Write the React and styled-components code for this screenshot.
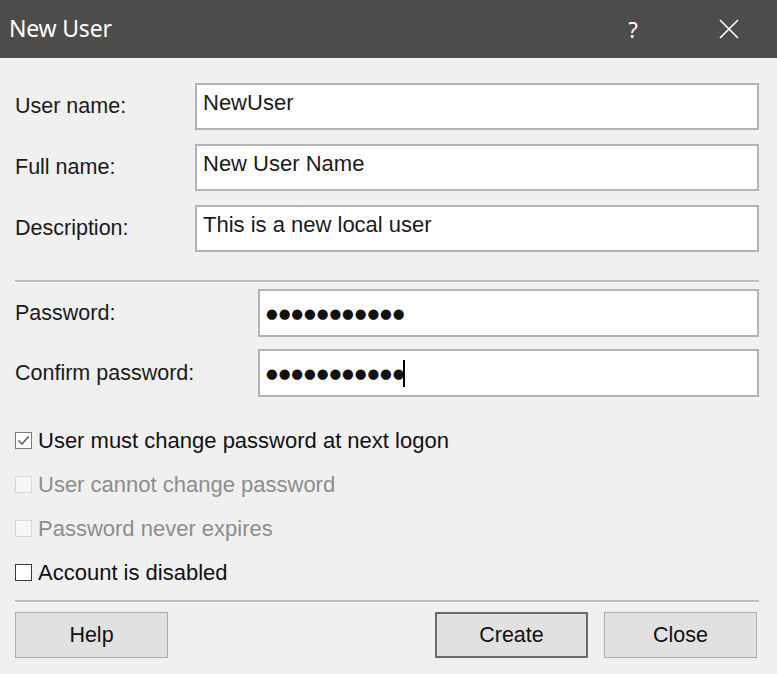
import React from "react";
import styled, { createGlobalStyle } from "styled-components";

const Global = createGlobalStyle`
  html, body { margin: 0; padding: 0; background: #f0f0f0; }
  body { font-family: "Liberation Sans", Arial, sans-serif; }
`;

const Dialog = styled.div`
  width: 777px;
  height: 674px;
  background: #f0f0f0;
  display: flex;
  flex-direction: column;
  overflow: hidden;
`;

const TitleBar = styled.div`
  height: 58px;
  background: #4d4c4a;
  color: #ffffff;
  display: flex;
  align-items: center;
  padding-left: 9px;
  font-family: "Noto Sans", sans-serif;
  font-size: 23px;
  flex-shrink: 0;
`;

const Title = styled.div`
  flex: 1;
  letter-spacing: -0.2px;
  margin-top: -2px;
`;

const TitleButton = styled.div`
  width: ${(p) => p.$w}px;
  height: 58px;
  display: flex;
  align-items: center;
  justify-content: center;
  font-size: 22px;
  margin-right: ${(p) => p.$mr || 0}px;
`;

const Content = styled.div`
  padding: 25px 18px 0 15px;
  display: flex;
  flex-direction: column;
`;

const FieldGrid = styled.div`
  display: grid;
  grid-template-columns: ${(p) => p.$label}px 1fr;
  row-gap: ${(p) => p.$gap}px;
  align-items: center;
`;

const Label = styled.div`
  font-size: 21.5px;
  color: #1a1a1a;
`;

const TextBox = styled.div`
  height: ${(p) => p.$h}px;
  box-sizing: border-box;
  background: #ffffff;
  border: 2px solid #b3b3b3;
  padding: 0 0 0 6px;
  display: flex;
  align-items: ${(p) => (p.$dots ? "center" : "flex-start")};
  padding-top: ${(p) => (p.$dots ? 0 : 5)}px;
  font-size: 22px;
  color: #1a1a1a;
`;

const Dots = styled.span`
  font-family: "DejaVu Sans", sans-serif;
  font-size: 13.5px;
  letter-spacing: 0.9px;
  margin-left: 0px;
  color: #111;
`;

const Caret = styled.span`
  display: inline-block;
  width: 2px;
  height: 27px;
  background: #000;
  margin-left: -2px;
`;

const Separator = styled.div`
  height: 2px;
  background: #bdbdbd;
  border-bottom: 1px solid #ffffff;
  margin: ${(p) => p.$m};
`;

const CheckList = styled.div`
  display: flex;
  flex-direction: column;
  gap: 21px;
  margin-top: 32px;
`;

const CheckRow = styled.div`
  display: flex;
  align-items: center;
  height: 23px;
  font-size: 22px;
  color: ${(p) => (p.$disabled ? "#8d8d8d" : "#111111")};
`;

const Box = styled.span`
  width: 17px;
  height: 17px;
  box-sizing: border-box;
  border: 1px solid ${(p) => (p.$disabled ? "#d9d9d9" : p.$checked ? "#7a7a7a" : "#3a3a3a")};
  background: ${(p) => (p.$disabled ? "#f7f7f7" : "#ffffff")};
  margin-right: 6px;
  display: flex;
  align-items: center;
  justify-content: center;
  flex-shrink: 0;
`;

const ButtonRow = styled.div`
  display: flex;
  align-items: center;
  padding-right: 2px;
`;

const Spacer = styled.div`
  flex: 1;
`;

const Button = styled.div`
  width: 153px;
  height: 46px;
  box-sizing: border-box;
  background: #e1e1e1;
  border: ${(p) => (p.$default ? "2px solid #6b6b6b" : "1px solid #adadad")};
  display: flex;
  align-items: center;
  justify-content: center;
  font-size: 21.5px;
  color: #111;
  margin-left: ${(p) => p.$ml || 0}px;
`;

function Check({ checked, disabled, children }) {
  return (
    <CheckRow $disabled={disabled}>
      <Box $checked={checked} $disabled={disabled}>
        {checked && (
          <svg width="13" height="13" viewBox="0 0 13 13">
            <path d="M1.5 6.5 L5 10 L11.8 2.4" fill="none" stroke="#6a6a6a" strokeWidth="1.7" />
          </svg>
        )}
      </Box>
      {children}
    </CheckRow>
  );
}

export default function App() {
  return (
    <Dialog>
      <Global />
      <TitleBar>
        <Title>New User</Title>
        <TitleButton $w={46}>?</TitleButton>
        <TitleButton $w={46} $mr={25} style={{ marginLeft: 50 }}>
          <svg width="20" height="20" viewBox="0 0 20 20">
            <path d="M1 1 L19 19 M19 1 L1 19" stroke="#fff" strokeWidth="1.6" />
          </svg>
        </TitleButton>
      </TitleBar>
      <Content>
        <FieldGrid $label={180} $gap={14}>
          <Label>User name:</Label>
          <TextBox $h={47}>NewUser</TextBox>
          <Label>Full name:</Label>
          <TextBox $h={47}>New User Name</TextBox>
          <Label>Description:</Label>
          <TextBox $h={47}>This is a new local user</TextBox>
        </FieldGrid>
        <Separator $m="28px 0 6px 0" />
        <FieldGrid $label={243} $gap={12}>
          <Label>Password:</Label>
          <TextBox $h={48} $dots>
            <Dots>●●●●●●●●●●●</Dots>
          </TextBox>
          <Label>Confirm password:</Label>
          <TextBox $h={48} $dots>
            <Dots>●●●●●●●●●●●</Dots>
            <Caret />
          </TextBox>
        </FieldGrid>
        <CheckList>
          <Check checked>User must change password at next logon</Check>
          <Check disabled>User cannot change password</Check>
          <Check disabled>Password never expires</Check>
          <Check>Account is disabled</Check>
        </CheckList>
        <Separator $m="16px 0 9px 0" />
        <ButtonRow>
          <Button>Help</Button>
          <Spacer />
          <Button $default>Create</Button>
          <Button $ml={16}>Close</Button>
        </ButtonRow>
      </Content>
    </Dialog>
  );
}
